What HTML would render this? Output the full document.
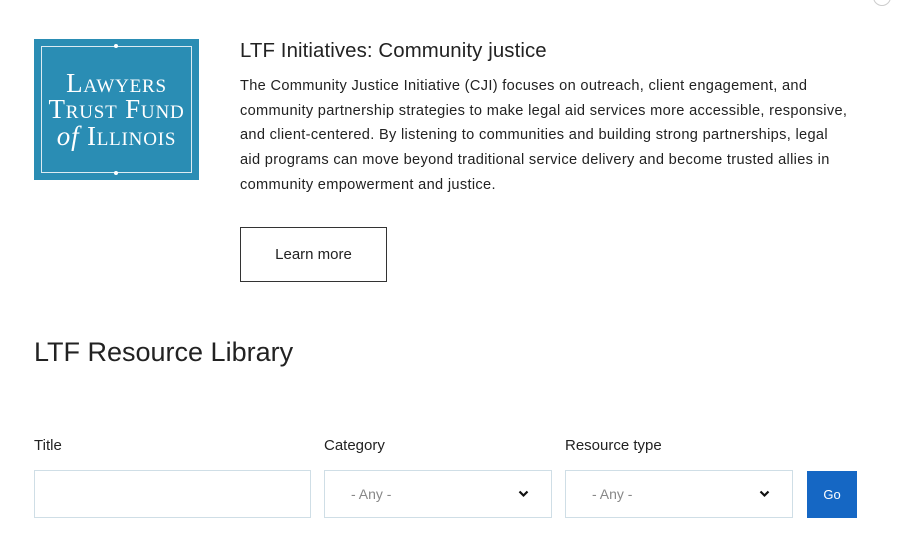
<!DOCTYPE html>
<html><head><meta charset="utf-8"><style>
body{margin:0;width:900px;height:549px;overflow:hidden;background:#fff;font-family:"Liberation Sans",sans-serif;color:#222;position:relative}
.a{position:absolute}
.logo{left:34px;top:39px;width:165px;height:141px;background:#2a8db4}
.logo .fr{position:absolute;left:7px;top:7px;right:7px;bottom:7px;border:1px solid #dcebf2}
.logo .t{position:absolute;left:0;right:0;text-align:center;color:#fff;font-family:"Liberation Serif",serif;font-variant:small-caps;font-size:27px;line-height:26px;letter-spacing:0.8px}
.dot{position:absolute;width:4px;height:4px;border-radius:2px;background:#fff;left:80px}
h2{margin:0;font-weight:normal}
p{margin:0;white-space:nowrap}
.box{border:1px solid #cfdee6;height:48px;box-sizing:border-box;background:#fff}
.sel{color:#888;font-size:14px;line-height:46px;padding-left:26px}
.chev{position:absolute;right:22px;top:19px}
</style></head><body>
<div class="a logo"><div class="fr"></div>
<div class="dot" style="top:5px"></div><div class="dot" style="top:132px"></div>
<div class="t" style="top:31px">Lawyers</div>
<div class="t" style="top:57px">Trust Fund</div>
<div class="t" style="top:84px"><i style="font-variant:normal">of</i> Illinois</div>
</div>
<h2 class="a" style="left:240px;top:40px;font-size:20.4px;letter-spacing:0.1px">LTF Initiatives: Community justice</h2>
<p class="a" style="left:240px;top:74px;font-size:14.6px;line-height:24.7px;letter-spacing:0.32px">The Community Justice Initiative (CJI) focuses on outreach, client engagement, and<br>community partnership strategies to make legal aid services more accessible, responsive,<br>and client-centered. By listening to communities and building strong partnerships, legal<br>aid programs can move beyond traditional service delivery and become trusted allies in<br>community empowerment and justice.</p>
<div class="a" style="left:240px;top:227px;width:145px;height:53px;border:1px solid #333;text-align:center;line-height:53px;font-size:15px">Learn more</div>
<h2 class="a" style="left:34px;top:337px;font-size:27px">LTF Resource Library</h2>
<div class="a" style="left:34px;top:437px;font-size:15px">Title</div>
<div class="a" style="left:324px;top:437px;font-size:15px">Category</div>
<div class="a" style="left:565px;top:437px;font-size:15px">Resource type</div>
<div class="a box" style="left:34px;top:470px;width:277px"></div>
<div class="a box sel" style="left:324px;top:470px;width:228px">- Any -<svg class="chev" width="11" height="8" viewBox="0 0 11 8"><path d="M1.5 1.5l4 4 4-4" stroke="#111" stroke-width="2.2" fill="none"/></svg></div>
<div class="a box sel" style="left:565px;top:470px;width:228px">- Any -<svg class="chev" width="11" height="8" viewBox="0 0 11 8"><path d="M1.5 1.5l4 4 4-4" stroke="#111" stroke-width="2.2" fill="none"/></svg></div>
<div class="a" style="left:807px;top:471px;width:50px;height:47px;background:#1567c4;color:#fff;font-size:13px;text-align:center;line-height:47px">Go</div>
<div class="a" style="left:873px;top:-12px;width:16px;height:16px;border:1px solid #ccc;border-radius:50%"></div>
</body></html>
